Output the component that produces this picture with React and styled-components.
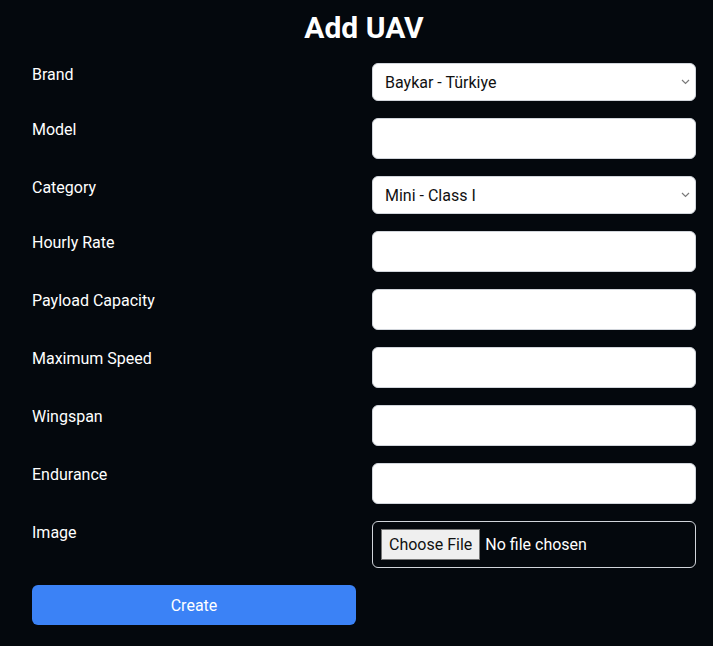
import React from "react";
import styled, { createGlobalStyle } from "styled-components";

const Global = createGlobalStyle`
  html, body { margin: 0; padding: 0; background: #04080d; }
  body { font-family: Roboto, "Liberation Sans", sans-serif; color: #fff; }
  * { box-sizing: border-box; }
`;

const Page = styled.div`
  padding: 10px 17px 21px 32px;
  background: #04080d;
  min-height: 646px;
`;

const Title = styled.h1`
  margin: 0 0 17px;
  text-align: center;
  font-size: 30px;
  line-height: 36px;
  font-weight: 700;
  color: #fff;
`;

const Form = styled.form`
  display: grid;
  grid-template-columns: 1fr 1fr;
  column-gap: 16px;
  row-gap: 17px;
`;

const Label = styled.label`
  font-size: 16px;
  line-height: 24px;
  color: #fff;
  font-weight: 400;
`;

const fieldBase = `
  width: 100%;
  font-family: Roboto, "Liberation Sans", sans-serif;
  font-size: 16px;
  border: 1px solid #d1d5db;
  border-radius: 6px;
  background: #fff;
  color: #111;
  outline: none;
`;

const SelectWrap = styled.div`
  position: relative;
`;

const Select = styled.select`
  ${fieldBase}
  display: block;
  height: 38px;
  padding: 0 24px 0 12px;
  appearance: none;
  -webkit-appearance: none;
`;

const Chevron = styled.svg`
  position: absolute;
  right: 6px;
  top: 16px;
  width: 9px;
  height: 6px;
  pointer-events: none;
`;

const Input = styled.input`
  ${fieldBase}
  display: block;
  height: 41px;
  padding: 0 12px;
`;

const FileInput = styled.input`
  width: 100%;
  height: 47px;
  font-family: Roboto, "Liberation Sans", sans-serif;
  font-size: 16px;
  color: #fff;
  background: transparent;
  border: 1px solid #d1d5db;
  border-radius: 6px;
  padding: 7px 8px;

  &::file-selector-button {
    font-family: Roboto, "Liberation Sans", sans-serif;
    font-size: 16px;
    height: 31px;
    padding: 0 7px;
    margin-right: 5px;
    background: #efefef;
    color: #111;
    border: 1px solid #767676;
    border-radius: 0;
  }
`;

const Button = styled.button`
  height: 40px;
  border: none;
  border-radius: 6px;
  background: #3b82f6;
  color: #fff;
  font-family: Roboto, "Liberation Sans", sans-serif;
  font-size: 16px;
  cursor: pointer;
`;

const fields = [
  { label: "Brand", type: "select", options: ["Baykar - Türkiye"] },
  { label: "Model" },
  { label: "Category", type: "select", options: ["Mini - Class I"] },
  { label: "Hourly Rate" },
  { label: "Payload Capacity" },
  { label: "Maximum Speed" },
  { label: "Wingspan" },
  { label: "Endurance" },
];

export default function App() {
  return (
    <>
      <Global />
      <Page>
        <Title>Add UAV</Title>
        <Form onSubmit={(e) => e.preventDefault()}>
          {fields.map((f) => (
            <React.Fragment key={f.label}>
              <Label>{f.label}</Label>
              {f.type === "select" ? (
                <SelectWrap>
                  <Select defaultValue={f.options[0]}>
                    {f.options.map((o) => (
                      <option key={o}>{o}</option>
                    ))}
                  </Select>
                  <Chevron viewBox="0 0 9 6">
                    <path d="M1 1 L4.5 4.5 L8 1" fill="none" stroke="#7a7a7a" strokeWidth="1.2" />
                  </Chevron>
                </SelectWrap>
              ) : (
                <Input type="text" />
              )}
            </React.Fragment>
          ))}
          <Label>Image</Label>
          <FileInput type="file" />
          <Button type="submit">Create</Button>
        </Form>
      </Page>
    </>
  );
}
